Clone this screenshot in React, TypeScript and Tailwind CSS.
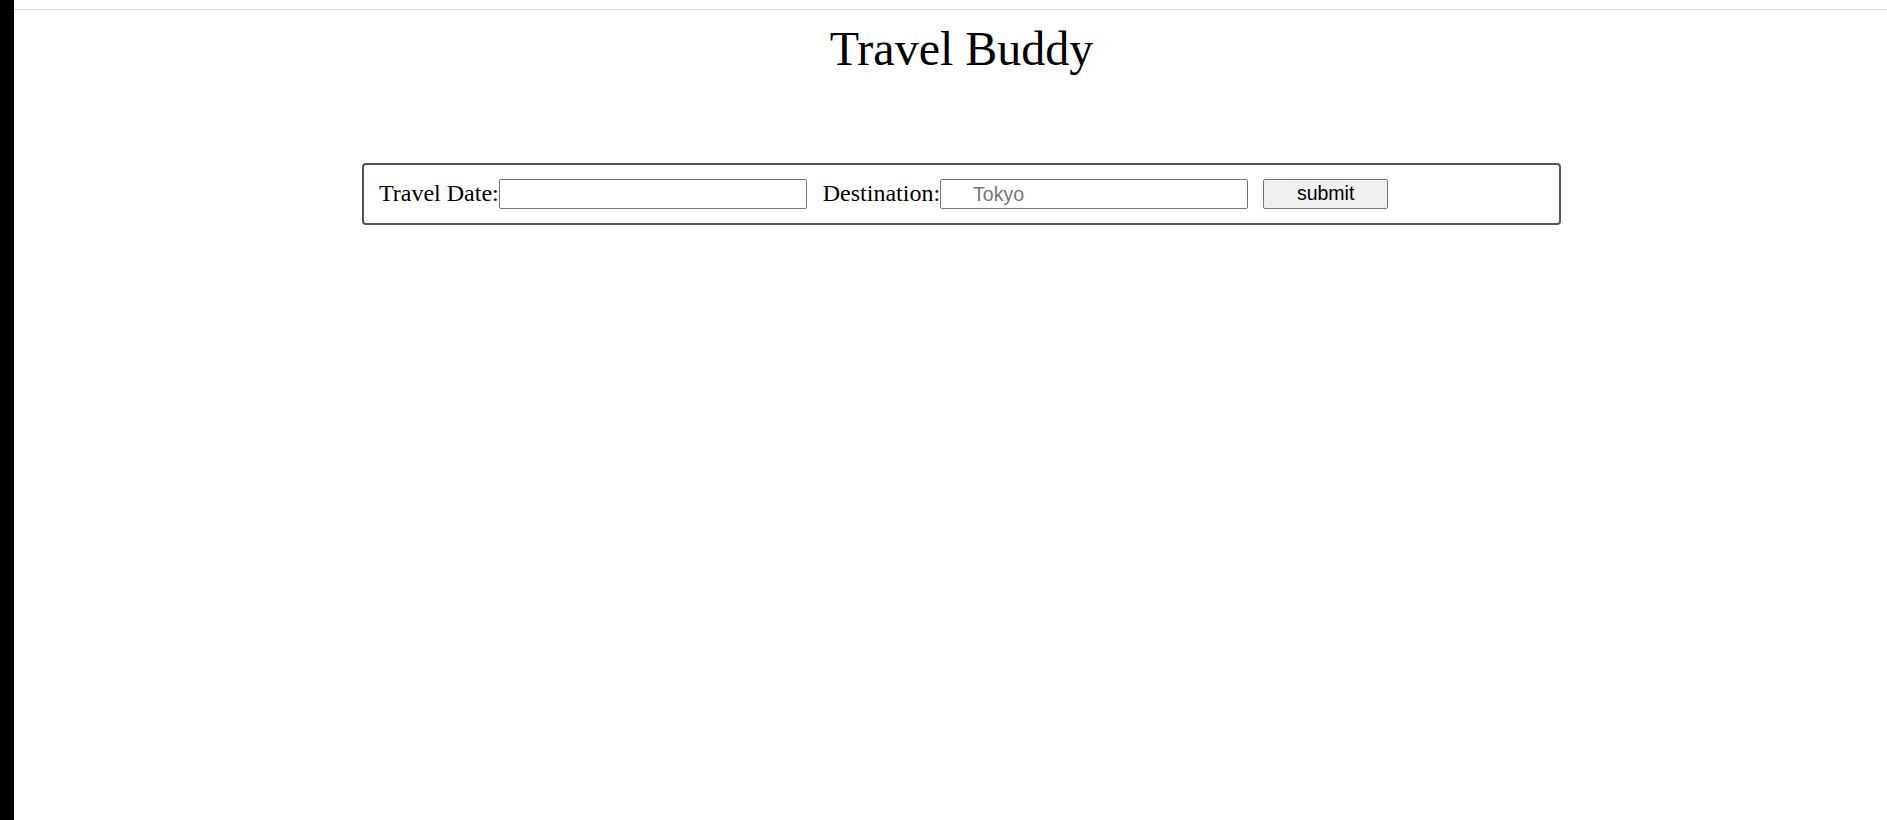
export default function App() {
  return (
    <div className="flex h-[820px] w-full bg-white">
      {/* dark side strip */}
      <div className="w-[14px] shrink-0 bg-black" />

      <div className="flex flex-1 flex-col">
        <div className="h-[9px]" />
        <div className="h-px bg-[#dadada]" />

        <div className="ml-[348px] w-[1199px]">
          <h1 className="mt-[11px] text-center font-['Liberation_Serif',serif] text-[48px] font-normal leading-[55px] text-black">
            Travel Buddy
          </h1>

          <form
            className="mt-[87px] flex h-[62px] items-center rounded-[4px] border-2 border-[#555555] px-[15px] font-['Liberation_Serif',serif] text-[24px] text-black"
            onSubmit={(e) => e.preventDefault()}
          >
            <label htmlFor="date" className="pb-[3px] leading-[28px]">
              Travel Date:
            </label>
            <input
              id="date"
              type="text"
              className="h-[30px] w-[308px] rounded-[2px] border border-[#767676] bg-white px-[2px] font-['Liberation_Sans',sans-serif] text-[19px]"
            />

            <label htmlFor="dest" className="ml-[16px] pb-[3px] leading-[28px]">
              Destination:
            </label>
            <input
              id="dest"
              type="text"
              placeholder="Tokyo"
              className="h-[30px] w-[308px] rounded-[2px] border border-[#767676] bg-white pl-[32px] font-['Liberation_Sans',sans-serif] text-[19.5px] placeholder:text-[#757575]"
            />

            <button
              type="submit"
              className="ml-[15px] h-[30px] w-[125px] rounded-[2px] border border-[#767676] bg-[#efefef] font-['Liberation_Sans',sans-serif] text-[19.5px] leading-none text-black"
            >
              submit
            </button>
          </form>
        </div>
      </div>
    </div>
  )
}
